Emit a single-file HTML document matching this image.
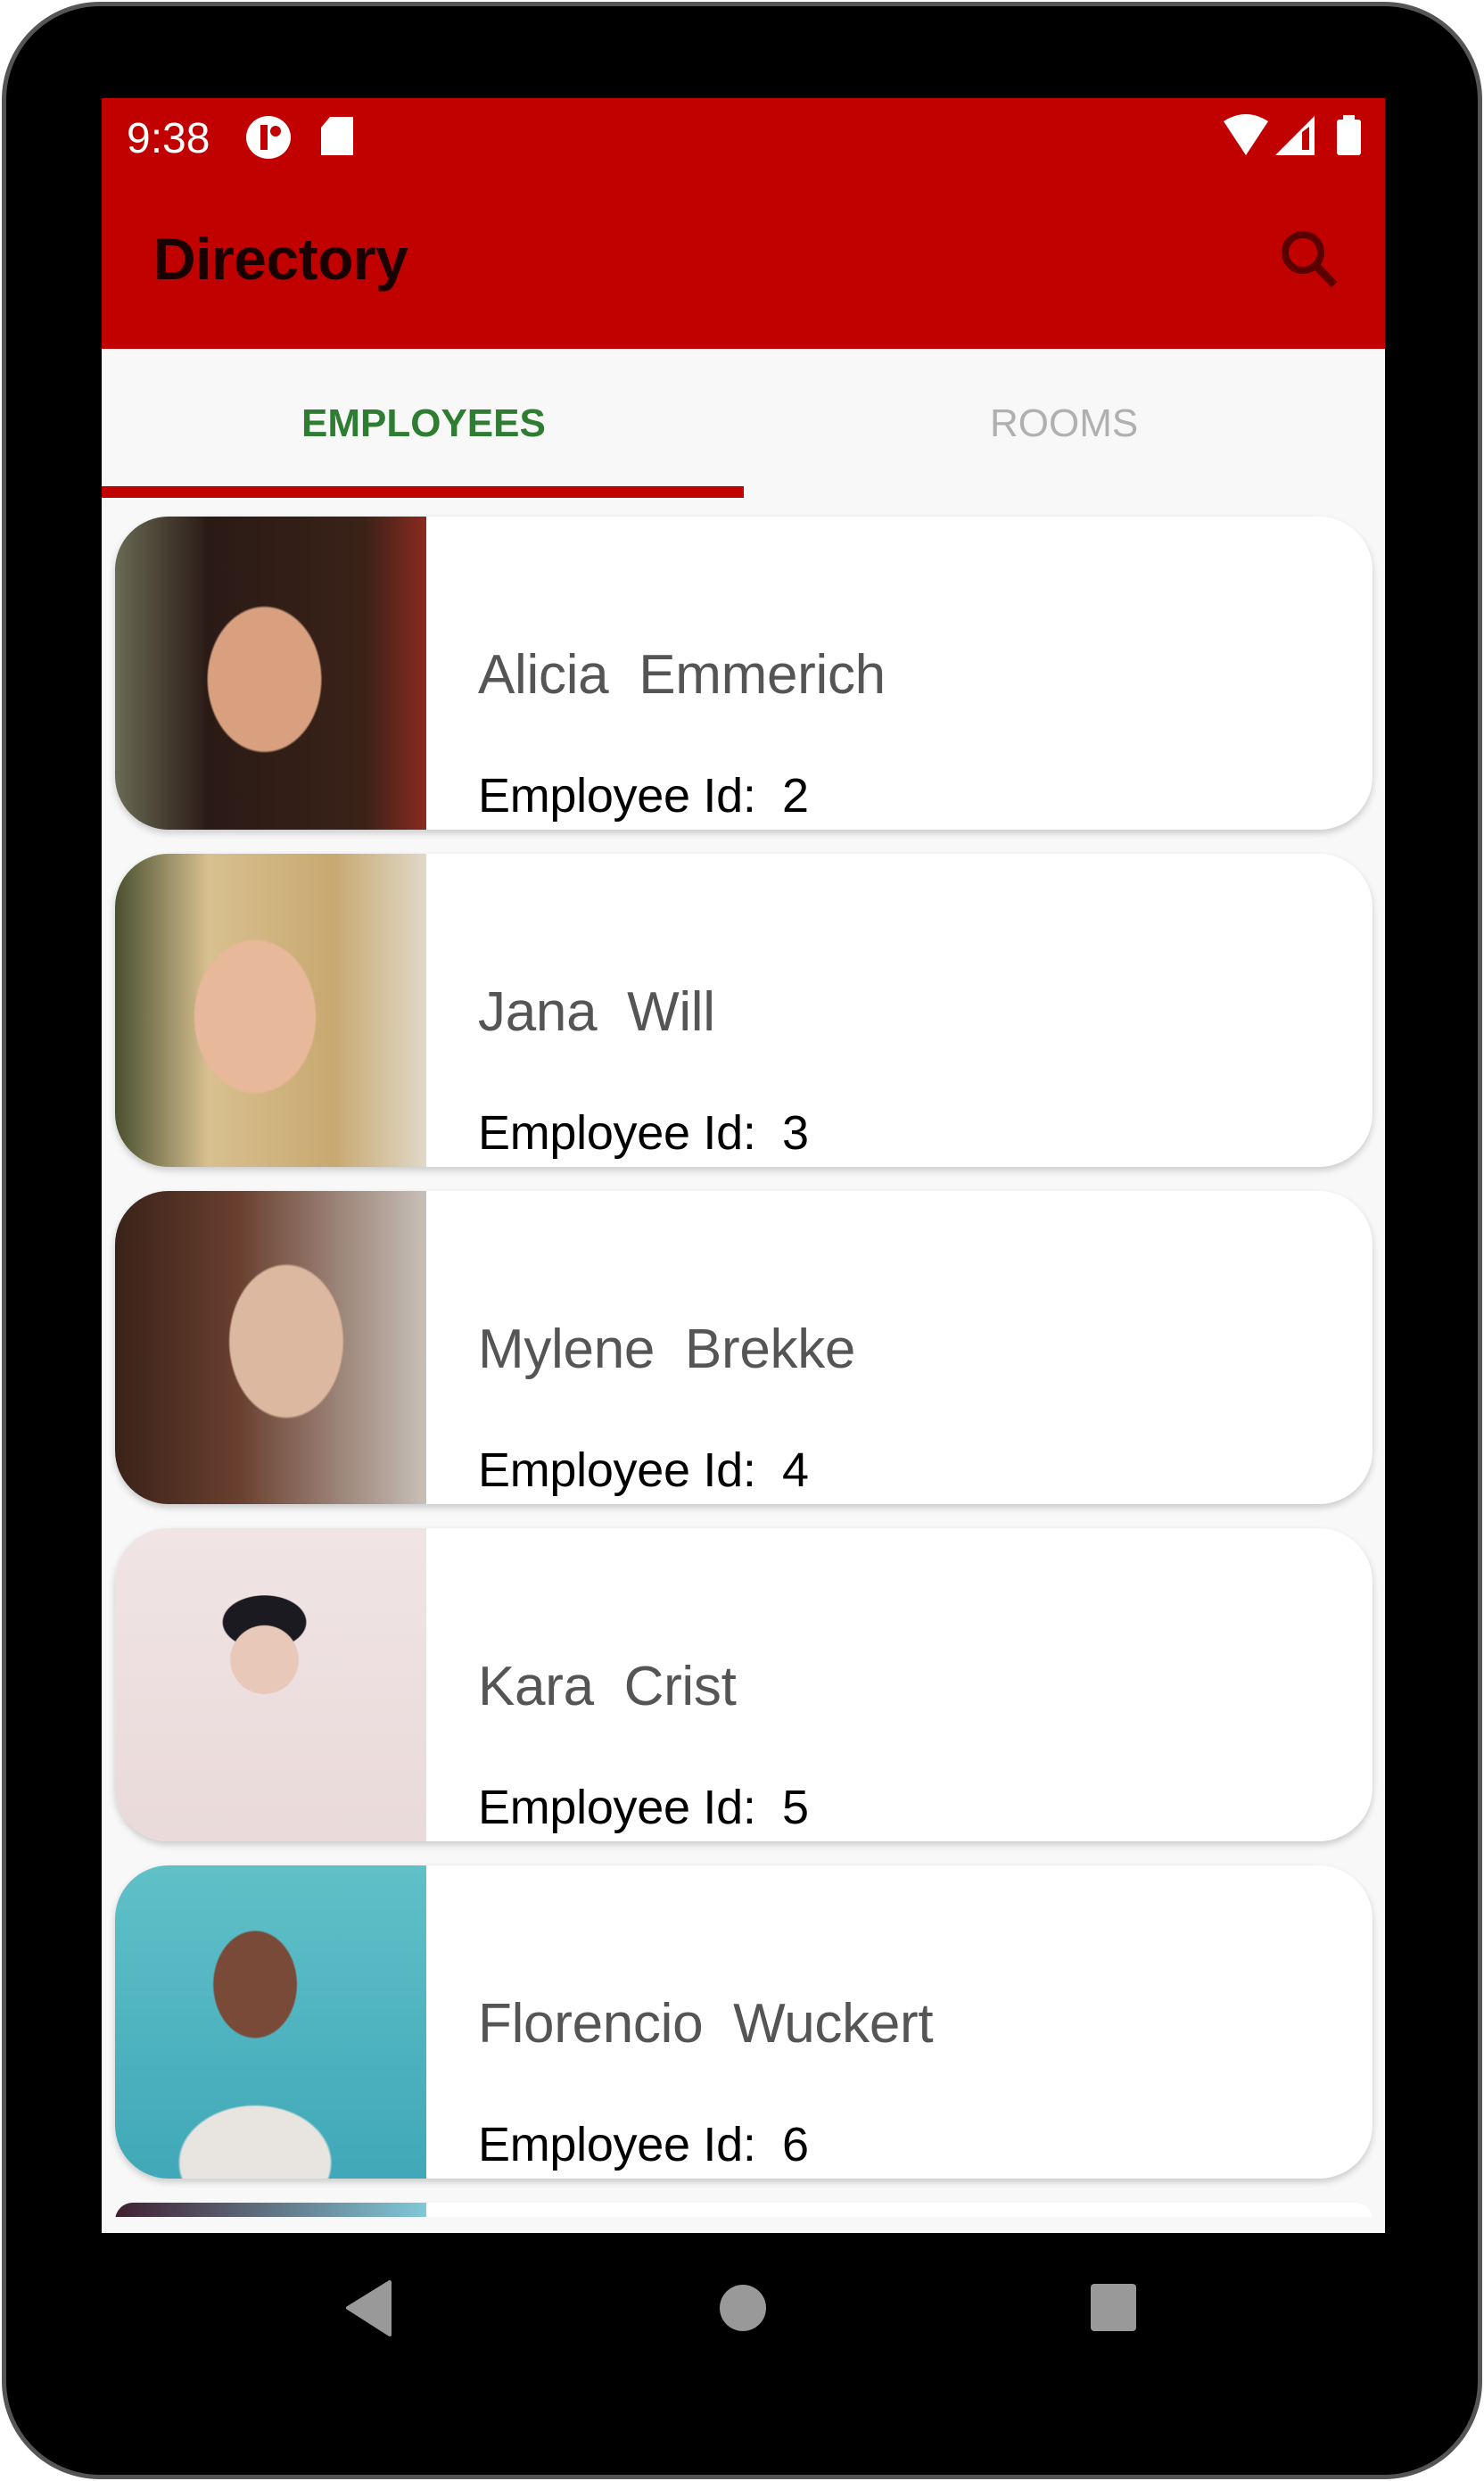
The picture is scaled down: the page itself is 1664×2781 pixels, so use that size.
<!DOCTYPE html>
<html><head><meta charset="utf-8"><style>
*{margin:0;padding:0;box-sizing:border-box}
body{width:1664px;height:2781px;background:#fff;position:relative;overflow:hidden;font-family:"Liberation Sans",Roboto,sans-serif}
.frame{position:absolute;left:2px;top:2px;width:1660px;height:2777px;background:#000;border-radius:110px;border:5px solid #555}
.screen{position:absolute;left:114px;top:110px;width:1439px;height:2393px;background:#f8f8f8;overflow:hidden}
.bar{position:absolute;left:0;top:0;width:100%;height:281px;background:#c10000}
.time{position:absolute;left:28px;top:18px;color:#fff;font-size:48px}
.title{position:absolute;left:58px;top:142px;font-size:66px;font-weight:bold;color:#1a0000;letter-spacing:-0.5px}
.tab{position:absolute;top:340px;font-size:44px;font-weight:bold}
.ind{position:absolute;left:0;top:435px;width:720px;height:13px;background:#c10000}
.card{position:absolute;left:15px;width:1410px;height:351px;background:#fff;border-radius:60px;overflow:hidden;box-shadow:0 4px 8px rgba(0,0,0,.18)}
.ph{position:absolute;left:0;top:0;width:349px;height:100%}
.nm{position:absolute;left:407px;top:142px;font-size:62px;color:#555;white-space:pre;letter-spacing:-0.3px}
.id{position:absolute;left:407px;top:282px;font-size:54px;color:#000;white-space:pre;letter-spacing:-0.3px}
</style></head><body>
<div class="frame"></div>
<div class="screen">
<div class="bar">
<div class="time">9:38</div>
<svg style="position:absolute;left:160px;top:18px" width="130" height="60">
<ellipse cx="27" cy="26" rx="25" ry="24" fill="#fff"/><rect x="18" y="12" width="8" height="28" fill="#c10000"/><circle cx="35" cy="19" r="6" fill="#c10000"/>
<path d="M96 3h26v43h-36v-31z" fill="#fff"/></svg>
<svg style="position:absolute;left:1256px;top:18px" width="180" height="50">
<path d="M2 8 Q27 -8 52 8 L27 46z" fill="#fff"/>
<path d="M60 46 L104 2 V46z" fill="#fff"/><path d="M90 20 V40 H98 V14z" fill="#c10000"/>
<rect x="129" y="6" width="27" height="40" rx="3" fill="#fff"/><rect x="136" y="1" width="13" height="6" fill="#fff"/></svg>
<div class="title">Directory</div>
<svg style="position:absolute;left:1320px;top:145px" width="70" height="70"><circle cx="27" cy="28" r="20" stroke="#5a0000" stroke-width="8" fill="none"/><path d="M41 42 L62 64" stroke="#5a0000" stroke-width="9"/></svg>
</div>
<div class="tab" style="left:224px;color:#2e7d32">EMPLOYEES</div>
<div class="tab" style="left:996px;color:#b0b0b0;font-weight:normal">ROOMS</div>
<div class="ind"></div>

<div class="card" style="top:469px"><div class="ph" style="background:radial-gradient(ellipse 30% 38% at 48% 52%,#d9a080 60%,transparent 62%),linear-gradient(90deg,#6a6a55,#2a1a15 30%,#3a2218 80%,#8a2a20)"></div><div class="nm">Alicia  Emmerich</div><div class="id">Employee Id:  2</div></div>
<div class="card" style="top:847px"><div class="ph" style="background:radial-gradient(ellipse 32% 40% at 45% 52%,#e8b89a 60%,transparent 62%),linear-gradient(90deg,#4a5030,#d8c090 30%,#c8a870 70%,#e0d8c8)"></div><div class="nm">Jana  Will</div><div class="id">Employee Id:  3</div></div>
<div class="card" style="top:1225px"><div class="ph" style="background:radial-gradient(ellipse 30% 40% at 55% 48%,#dcb8a0 60%,transparent 62%),linear-gradient(90deg,#3a2218,#6a4030 40%,#c8c0b8)"></div><div class="nm">Mylene  Brekke</div><div class="id">Employee Id:  4</div></div>
<div class="card" style="top:1603px"><div class="ph" style="background:radial-gradient(ellipse 18% 18% at 48% 42%,#e8c8b8 60%,transparent 62%),radial-gradient(ellipse 22% 14% at 48% 30%,#1a1a20 60%,transparent 62%),linear-gradient(#f0e4e4,#eadada)"></div><div class="nm">Kara  Crist</div><div class="id">Employee Id:  5</div></div>
<div class="card" style="top:1981px"><div class="ph" style="background:radial-gradient(ellipse 22% 28% at 45% 38%,#7a4a38 60%,transparent 62%),radial-gradient(ellipse 40% 30% at 45% 95%,#e8e4e0 60%,transparent 62%),linear-gradient(#60c0c8,#40a8b8)"></div><div class="nm">Florencio  Wuckert</div><div class="id">Employee Id:  6</div></div>
<div class="card" style="top:2359px;height:40px;box-shadow:none"><div class="ph" style="background:linear-gradient(90deg,#402030,#80c8d8)"></div></div>
<div style="position:absolute;left:0;top:2375px;width:100%;height:20px;background:#f8f8f8"></div>
</div>
<svg style="position:absolute;left:380px;top:2555px" width="920" height="65">
<path d="M10 32 L57 3 V62z" fill="#999" stroke="#999" stroke-width="4" stroke-linejoin="round"/>
<circle cx="453" cy="32" r="26" fill="#999"/>
<rect x="843" y="5" width="51" height="53" rx="4" fill="#999"/></svg>
</body></html>
